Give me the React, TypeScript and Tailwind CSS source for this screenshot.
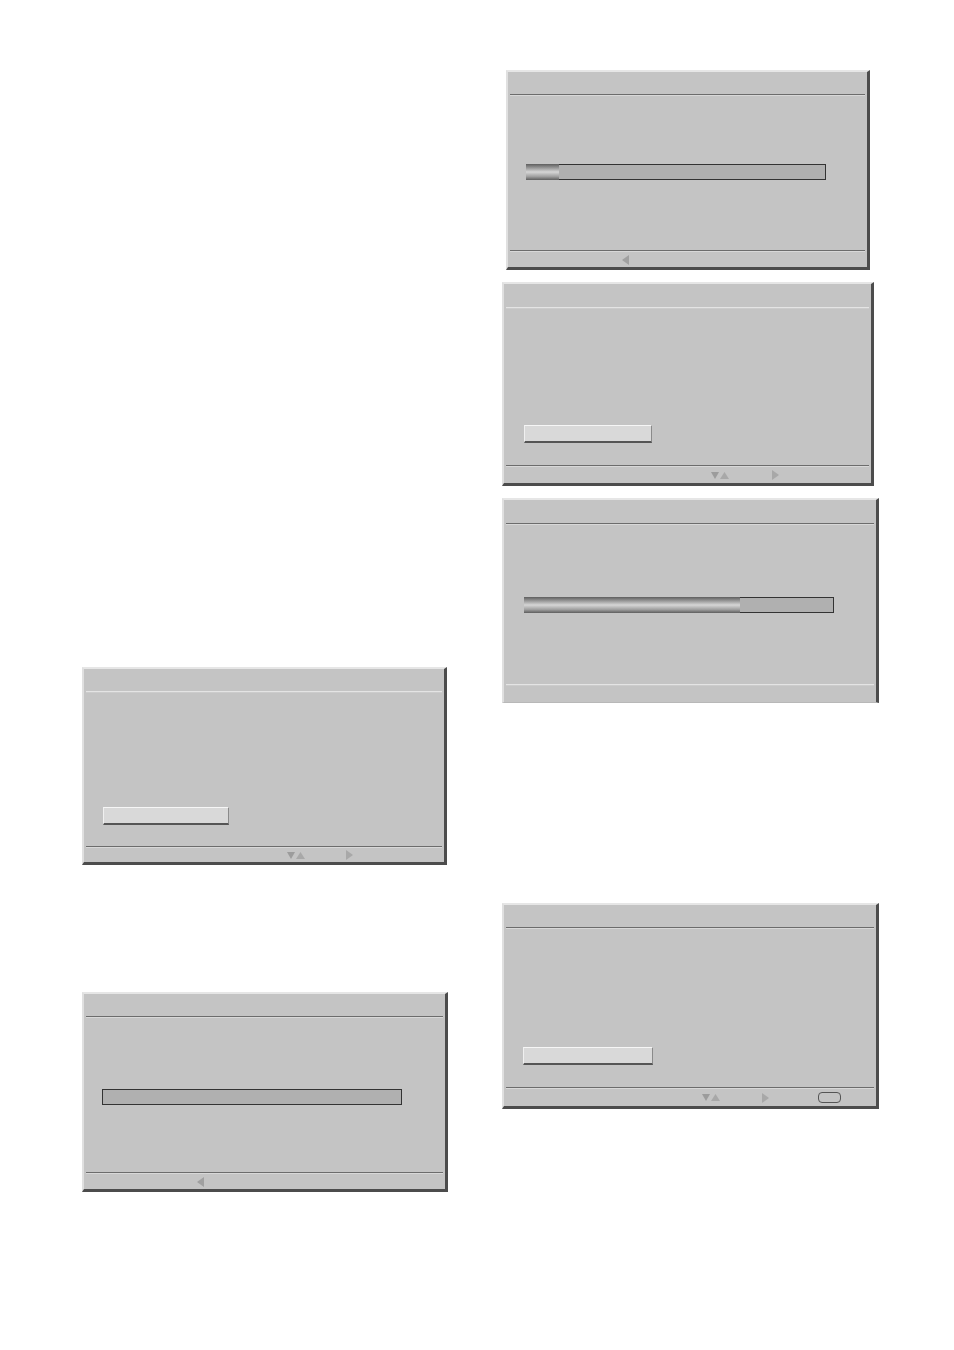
import React from 'react';

type LineTone = 'dark' | 'light';

interface PanelProps {
  w: number;
  h: number;
  headH: number;
  bodyH: number;
  topLine: LineTone;
  bottomLine: LineTone;
  className?: string;
  children?: React.ReactNode;
  footer?: React.ReactNode;
}

const Rule: React.FC<{ tone: LineTone }> = ({ tone }) =>
  tone === 'dark' ? (
    <div className="mx-[2px] h-[2px] border-t border-t-[#6c6c6c] border-b border-b-[#d8d8d8]" />
  ) : (
    <div className="mx-[2px] h-[2px] border-t border-t-[#e4e4e4] border-b border-b-[#cccccc]" />
  );

const Panel: React.FC<PanelProps> = ({ w, h, headH, bodyH, topLine, bottomLine, className = '', children, footer }) => (
  <div
    className={`flex flex-col bg-[#c4c4c4] border-t-2 border-l-2 border-t-[#e6e6e6] border-l-[#e0e0e0] border-r-[3px] border-r-[#4c4c4c] ${className}`}
    style={{ width: w, height: h }}
  >
    <div style={{ height: headH }} />
    <Rule tone={topLine} />
    <div className="relative" style={{ height: bodyH }}>
      {children}
    </div>
    <Rule tone={bottomLine} />
    <div className="flex flex-1 items-center">{footer}</div>
  </div>
);

const UpDown = () => (
  <svg width="18" height="9" viewBox="0 0 18 9">
    <polygon points="0,1 8,1 4,8" fill="#9c9c9c" />
    <polygon points="9,8 18,8 13.5,1" fill="#a8a8a8" />
  </svg>
);

const Right = () => (
  <svg width="7" height="10" viewBox="0 0 7 10">
    <polygon points="0,0 7,5 0,10" fill="#a8a8a8" />
  </svg>
);

const Left = () => (
  <svg width="7" height="10" viewBox="0 0 7 10">
    <polygon points="7,0 0,5 7,10" fill="#a0a0a0" />
  </svg>
);

const Button: React.FC<{ w: number; h: number; className?: string }> = ({ w, h, className = '' }) => (
  <div
    className={`bg-[#d9d9d9] border-t border-l border-t-[#f6f6f6] border-l-[#f0f0f0] border-b-2 border-r border-b-[#555555] border-r-[#8a8a8a] ${className}`}
    style={{ width: w, height: h }}
  />
);

const Bar: React.FC<{ w: number; fill: number; className?: string }> = ({ w, fill, className = '' }) => (
  <div className={`relative h-[16px] bg-[#b0b0b0] border border-[#333333] ${className}`} style={{ width: w }}>
    {fill > 0 && (
      <div
        className="absolute left-[-1px] top-[-1px] h-[16px] bg-[linear-gradient(to_bottom,#5e5e5e,#9a9a9a_25%,#d6d6d6_50%,#a0a0a0_78%,#5e5e5e)]"
        style={{ width: fill }}
      />
    )}
  </div>
);

export default function App() {
  return (
    <div className="flex w-[954px] h-[1350px] bg-white overflow-hidden">
      {/* left column */}
      <div className="ml-[82px] pt-[667px] flex flex-col">
        <Panel w={365} h={198} headH={22} bodyH={153} topLine="light" bottomLine="dark" className="border-b-[3px] border-b-[#4c4c4c]"
          footer={<div className="flex items-center pl-[203px]"><UpDown /><div className="ml-[41px]"><Right /></div></div>}>
          <Button w={126} h={18} className="absolute left-[19px] top-[114px]" />
        </Panel>
        <Panel w={366} h={200} headH={22} bodyH={154} topLine="dark" bottomLine="dark" className="mt-[127px] border-b-[3px] border-b-[#4c4c4c]"
          footer={<div className="pl-[113px] flex items-center"><Left /></div>}>
          <Bar w={300} fill={0} className="absolute left-[18px] top-[71px]" />
        </Panel>
      </div>

      {/* right column */}
      <div className="ml-[54px] pt-[70px] flex flex-col">
        <Panel w={364} h={200} headH={22} bodyH={154} topLine="dark" bottomLine="dark" className="ml-[4px] border-b-[3px] border-b-[#4c4c4c]"
          footer={<div className="pl-[114px] flex items-center"><Left /></div>}>
          <Bar w={300} fill={33} className="absolute left-[18px] top-[68px]" />
        </Panel>
        <Panel w={372} h={204} headH={23} bodyH={156} topLine="light" bottomLine="dark" className="mt-[12px] border-b-[3px] border-b-[#4c4c4c]"
          footer={<div className="flex items-center pl-[207px]"><UpDown /><div className="ml-[43px]"><Right /></div></div>}>
          <Button w={128} h={18} className="absolute left-[20px] top-[116px]" />
        </Panel>
        <Panel w={377} h={205} headH={23} bodyH={159} topLine="dark" bottomLine="light" className="mt-[12px] border-b border-b-[#b8b8b8]">
          <Bar w={310} fill={216} className="absolute left-[20px] top-[72px]" />
        </Panel>
        <Panel w={377} h={206} headH={22} bodyH={158} topLine="dark" bottomLine="dark" className="mt-[200px] border-b-[3px] border-b-[#4c4c4c]"
          footer={
            <div className="flex items-center pl-[198px]">
              <UpDown />
              <div className="ml-[42px]"><Right /></div>
              <div className="ml-[49px] w-[23px] h-[11px] rounded-[4px] border border-[#555555]" />
            </div>
          }>
          <Button w={130} h={18} className="absolute left-[19px] top-[118px]" />
        </Panel>
      </div>
    </div>
  );
}
